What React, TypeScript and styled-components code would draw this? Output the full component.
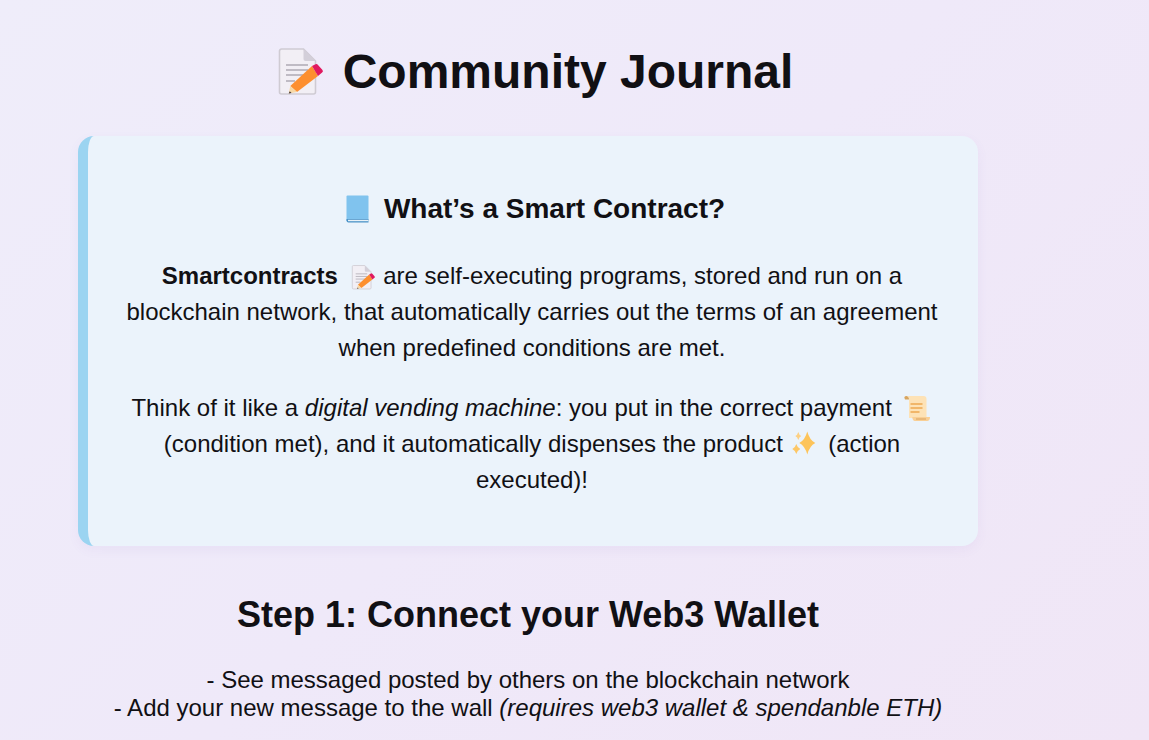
import React from "react";
import styled, { createGlobalStyle } from "styled-components";

const GlobalStyle = createGlobalStyle`
  html, body {
    margin: 0;
    height: 100%;
    overflow: hidden;
  }
  body {
    background: linear-gradient(135deg, #efedfa 0%, #efe9f9 50%, #f0e6f6 100%);
    font-family: "Liberation Sans", Arial, sans-serif;
    color: #111014;
  }
`;

const Page = styled.main`
  width: 900px;
  margin-left: 78px;
  padding-top: 42px;
  display: flex;
  flex-direction: column;
  align-items: center;
`;

const Title = styled.h1`
  margin: 0 0 34px;
  padding-left: 14px;
  font-size: 48px;
  line-height: 60px;
  font-weight: 700;
  display: flex;
  align-items: center;
  gap: 18px;
`;

const InfoCard = styled.section`
  box-sizing: border-box;
  width: 900px;
  height: 410px;
  padding: 53px 33px 0 31px;
  background: #ebf3fb;
  border-left: 10px solid #9bd4f1;
  border-radius: 16px;
  box-shadow: 0 4px 12px rgba(120, 90, 190, 0.06);
  text-align: center;
`;

const CardTitle = styled.h2`
  margin: 0 0 29px;
  padding-left: 3px;
  font-size: 28px;
  line-height: 40px;
  font-weight: 700;
  display: flex;
  justify-content: center;
  align-items: center;
  gap: 14px;
`;

const CardText = styled.p`
  margin: 0 0 24px;
  font-size: 24px;
  line-height: 36px;
`;

const StepTitle = styled.h2`
  margin: 47px 0 29px;
  font-size: 36px;
  line-height: 44px;
  font-weight: 700;
`;

const Notes = styled.p`
  margin: 0;
  font-size: 24px;
  line-height: 28px;
  text-align: center;
`;

const Glyph = styled.svg<{ $size: number; $before?: number; $after?: number }>`
  width: ${(p) => p.$size}px;
  height: ${(p) => p.$size}px;
  flex: none;
  vertical-align: -6px;
  margin: 0 ${(p) => p.$after ?? 0}px 0 ${(p) => p.$before ?? 0}px;
`;

type IconProps = { size: number; before?: number; after?: number };

const MemoIcon = ({ size, before, after }: IconProps) => (
  <Glyph $size={size} $before={before} $after={after} viewBox="0 0 48 48">
    <path d="M2.500 3a2 2 0 0 1 2-2h22l12 12v31a2 2 0 0 1-2 2h-32a2 2 0 0 1-2-2z" fill="#f2eff5" stroke="#cfcbd3" strokeWidth="1.6" />
    <path d="M26.500 1v10a2 2 0 0 0 2 2h10z" fill="#d3cfd9" />
    <path d="M9 17h22M9 22h22M9 27h20M9 33h9" stroke="#aeaab4" strokeWidth="1.5" />
    <path d="M13.300 38L35 18l6 10-21 16z" fill="#fd8f2f" />
    <path d="M13.300 38l6.700 6-8.300 1.500z" fill="#f7d8a6" />
    <path d="M12.800 43.300l-1.100 2.200 2.800-.5z" fill="#3a2f35" />
    <path d="M35 18l3.500-1.700a2 2 0 0 1 2.500.6l4.500 5a2 2 0 0 1-.4 2.700L41 28z" fill="#e0195f" />
  </Glyph>
);

const BookIcon = ({ size }: IconProps) => (
  <Glyph $size={size} viewBox="0 0 28 28">
    <path d="M4.500 1.500a1 1 0 0 1 1-1h20a1 1 0 0 1 1 1V26h-22z" fill="#80c3ee" />
    <path d="M4.500 24h22v3.500H6.500a2 2 0 0 1-2-2z" fill="#4c93c8" />
    <path d="M6 24.800h20.500v1.400H6z" fill="#e9f2f8" />
  </Glyph>
);

const ScrollIcon = ({ size, before, after }: IconProps) => (
  <Glyph $size={size} $before={before} $after={after} viewBox="0 0 28 28">
    <path d="M4.500 2h17a3 3 0 0 1 3 3v19H7V5a3 3 0 0 0-2.500-3z" fill="#fde2b6" />
    <path d="M2.300 3.500A2 2 0 0 1 6 3c.8.400 1 1.500 1 2.500H3z" fill="#d8a560" />
    <path d="M8.500 10h12M8.500 14h12M8.500 18h9" stroke="#eda850" strokeWidth="1.300" />
    <path d="M10.300 23h17.700c0 2.500-1.200 4-3 4H13c-1.800 0-2.700-1.800-2.700-4z" fill="#f9cf95" />
    <path d="M14 25h10" stroke="#d9a25e" strokeWidth="1" />
  </Glyph>
);

const SparkleIcon = ({ size, before, after }: IconProps) => (
  <Glyph $size={size} $before={before} $after={after} viewBox="0 0 28 28">
    <path d="M16.300 1.500Q18.500 10 24.300 13 18.500 16 16.300 24.500 14 16 8.300 13 14 10 16.300 1.500z" fill="#fdc45a" />
    <path d="M7.300 2Q8.100 5 10.300 6 8.100 7 7.300 10 6.500 7 4.300 6 6.500 5 7.300 2z" fill="#fdd083" />
    <path d="M5.300 14Q6.300 17.500 9.300 19 6.300 20.500 5.300 24 4.300 20.500 1.300 19 4.300 17.500 5.300 14z" fill="#fdc766" />
  </Glyph>
);

export default function App() {
  return (
    <>
      <GlobalStyle />
      <Page>
        <Title>
          <MemoIcon size={48} />
          Community Journal
        </Title>
        <InfoCard>
          <CardTitle>
            <BookIcon size={28} />
            What’s a Smart Contract?
          </CardTitle>
          <CardText>
            <strong>Smartcontracts</strong>{" "}
            <MemoIcon size={25} before={6} after={1} /> are self-executing
            programs, stored and run on a blockchain network, that automatically
            carries out the terms of an agreement when predefined conditions are
            met.
          </CardText>
          <CardText>
            Think of it like a <em>digital vending machine</em>: you put in the
            correct payment <ScrollIcon size={28} before={3} after={3} />{" "}
            (condition met), and it automatically dispenses the product{" "}
            <SparkleIcon size={28} before={2} after={2} /> (action executed)!
          </CardText>
        </InfoCard>
        <StepTitle>Step 1: Connect your Web3 Wallet</StepTitle>
        <Notes>
          - See messaged posted by others on the blockchain network
          <br />- Add your new message to the wall{" "}
          <em>(requires web3 wallet &amp; spendanble ETH)</em>
        </Notes>
      </Page>
    </>
  );
}
